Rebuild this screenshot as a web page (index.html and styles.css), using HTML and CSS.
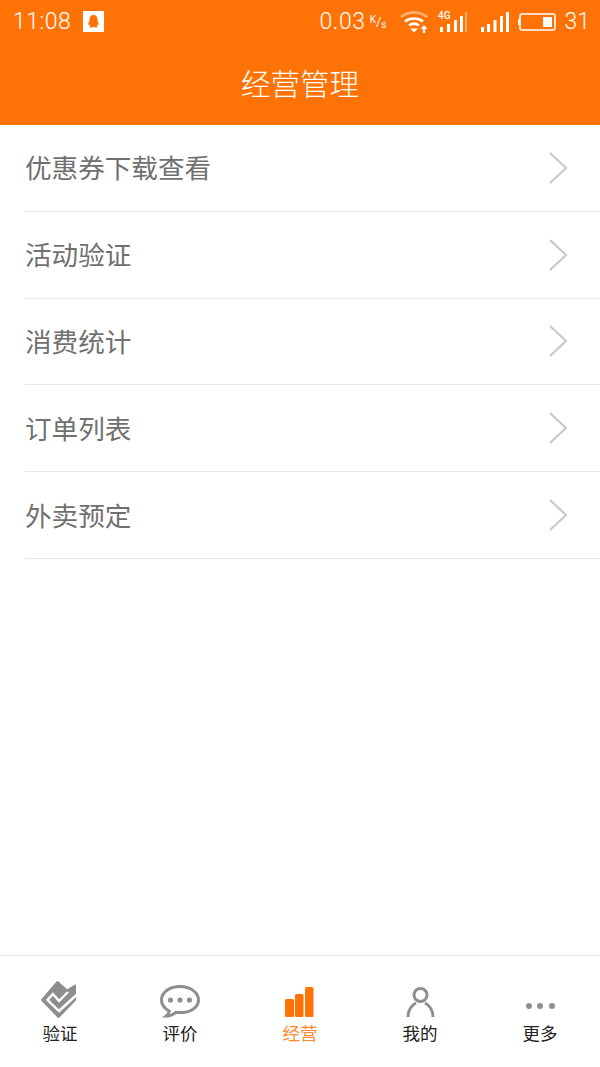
FILE: index.html
```html
<!DOCTYPE html>
<html lang="zh-CN">
<head>
  <meta charset="UTF-8">
  <title>经营管理</title>
  <link rel="stylesheet" href="styles.css">
</head>
<body>

<div class="page">
  <header class="top">
    <div class="status">
      <span class="time">11:08</span>
      <svg class="qq" width="21" height="21" viewBox="0 0 21 21">
        <rect width="21" height="21" fill="#fff"/>
        <path d="M10.500 4c-2.600 0-4 2-4 4.400v1.400l-1.300 3c-.3 1 .2 1.400 1.100.7.2.8.6 1.400 1 1.800-.8.4-1.100.9-.4 1.100 1 .2 2.300 0 3.100-.5h1c.8.5 2.100.7 3.100.5.7-.2.4-.7-.4-1.100.4-.4.8-1 1-1.800.9.700 1.400.300 1.100-.7l-1.300-3V8.400C14.500 6 13.100 4 10.500 4z" fill="#ff7306"/>
      </svg>
      <span class="speed">0.03</span>
      <span class="unit"><span class="unit-k">K</span>/<span class="unit-s">s</span></span>
      <svg class="wifi" width="28" height="24" viewBox="0 0 28 24" fill="none" stroke="#fff" stroke-width="2.600">
        <path d="M1 7C8 1 20 1 27 7" stroke-opacity=".45"/>
        <path d="M5 11.500c5-4 13-4 18 0"/>
        <path d="M9 15.500c3-2.300 7-2.300 10 0"/>
        <path d="M10 18.500h8l-4 4z" fill="#fff" stroke="none"/>
        <path d="M24 23v-5" stroke-width="2.200"/>
        <path d="M20.500 19l3.500-4 3.500 4z" fill="#fff" stroke="none"/>
      </svg>
      <svg class="sig" width="30" height="24" viewBox="0 0 30 24" fill="#fff">
        <text x="0" y="9" class="lte">4G</text>
        <rect x="2" y="17" width="3" height="5"/>
        <rect x="9" y="14" width="3" height="8"/>
        <rect x="16" y="10" width="3" height="12"/>
        <rect x="22" y="6" width="3" height="16"/>
        <rect x="27" y="2" width="2" height="20" fill-opacity=".4"/>
      </svg>
      <svg class="sig2" width="28" height="24" viewBox="0 0 28 24" fill="#fff">
        <rect x="0" y="17" width="3" height="5"/>
        <rect x="6" y="14" width="3" height="8"/>
        <rect x="12.500" y="10" width="3" height="12"/>
        <rect x="19" y="6" width="3" height="16"/>
        <rect x="25" y="2" width="3" height="20"/>
      </svg>
      <svg class="batt" width="38" height="20" viewBox="0 0 38 20" fill="none">
        <rect x="2" y="2" width="35" height="16" rx="2" stroke="#fff" stroke-width="1.600"/>
        <rect x="0" y="7" width="1.500" height="6" fill="#fff"/>
        <rect x="25" y="5" width="9" height="10" fill="#fff"/>
      </svg>
      <span class="level">31</span>
    </div>
    <h1 class="title">经营管理</h1>
  </header>

  <ul class="menu">
    <li class="row">优惠券下载查看<svg class="arrow" width="20" height="32" viewBox="0 0 20 32" fill="none" stroke="#c9c9c9" stroke-width="2.200"><path d="M2 1l16 15L2 31"/></svg></li>
    <li class="row">活动验证<svg class="arrow" width="20" height="32" viewBox="0 0 20 32" fill="none" stroke="#c9c9c9" stroke-width="2.200"><path d="M2 1l16 15L2 31"/></svg></li>
    <li class="row">消费统计<svg class="arrow" width="20" height="32" viewBox="0 0 20 32" fill="none" stroke="#c9c9c9" stroke-width="2.200"><path d="M2 1l16 15L2 31"/></svg></li>
    <li class="row">订单列表<svg class="arrow" width="20" height="32" viewBox="0 0 20 32" fill="none" stroke="#c9c9c9" stroke-width="2.200"><path d="M2 1l16 15L2 31"/></svg></li>
    <li class="row">外卖预定<svg class="arrow" width="20" height="32" viewBox="0 0 20 32" fill="none" stroke="#c9c9c9" stroke-width="2.200"><path d="M2 1l16 15L2 31"/></svg></li>
  </ul>

  <nav class="tabs">
    <div class="tab">
      <svg width="40" height="38" viewBox="0 0 40 38">
        <path d="M17.500 2L27 10.500 35 5.500V20L18.500 37 2 20z" fill="#8e8e8e" stroke="#8e8e8e" stroke-width="2" stroke-linejoin="round"/>
        <path d="M37 14.500L19 31 7.500 20l5.500-6 6 7 9-9" fill="none" stroke="#fff" stroke-width="2.400"/>
      </svg>
      <span>验证</span>
    </div>
    <div class="tab">
      <svg width="40" height="38" viewBox="0 0 40 38">
        <path d="M20 6.500C10 6.500 1.500 12 1.500 20c0 4.800 3.300 8.700 7.800 11-.3 2-1.300 3.700-3 5 3.800 0 7-1.500 9.500-3.700 1.300.2 2.900.3 4.200.3 10 0 18.500-5 18.500-12.600S30 6.500 20 6.500z" fill="none" stroke="#8e8e8e" stroke-width="3"/>
        <circle cx="10.500" cy="20" r="2.600" fill="#8e8e8e"/>
        <circle cx="20" cy="20" r="2.600" fill="#8e8e8e"/>
        <circle cx="29.500" cy="20" r="2.600" fill="#8e8e8e"/>
      </svg>
      <span>评价</span>
    </div>
    <div class="tab active">
      <svg width="40" height="38" viewBox="0 0 40 38" fill="#ff7306">
        <rect x="5" y="19" width="9" height="18" rx="1.500"/>
        <rect x="15" y="14" width="8.500" height="23" rx="1.500"/>
        <rect x="25" y="7" width="8.500" height="30" rx="1.500"/>
      </svg>
      <span>经营</span>
    </div>
    <div class="tab">
      <svg width="40" height="38" viewBox="0 0 40 38" fill="none" stroke="#8e8e8e" stroke-width="3">
        <circle cx="20.500" cy="15" r="6.500"/>
        <path d="M8 37c0-7 4-12 8-14M33 37c0-7-4-12-8-14"/>
      </svg>
      <span>我的</span>
    </div>
    <div class="tab">
      <svg width="40" height="38" viewBox="0 0 40 38" fill="#8e8e8e">
        <circle cx="9" cy="26" r="3"/>
        <circle cx="20" cy="26" r="3"/>
        <circle cx="32" cy="26" r="3"/>
      </svg>
      <span>更多</span>
    </div>
  </nav>
</div>

</body>
</html>
```

FILE: styles.css
```css
html, body {
  margin: 0;
  padding: 0;
}

body {
  font-family: "Noto Sans CJK SC", Roboto, sans-serif;
  background: #fff;
}

.page {
  width: 600px;
  height: 1067px;
  display: flex;
  flex-direction: column;
  overflow: hidden;
}

.top {
  height: 125px;
  flex: none;
  background: #ff7306;
  color: #fff;
}

.status {
  height: 43px;
  display: flex;
  align-items: center;
  font-family: Roboto, sans-serif;
  font-weight: 300;
  font-size: 23px;
  padding: 0 10px 0 13px;
}

.time {
  letter-spacing: 0.5px;
}

.qq {
  margin-left: 12px;
}

.speed {
  margin-left: auto;
  letter-spacing: 0.6px;
}

.unit {
  font-size: 13px;
  margin-left: 4px;
  font-weight: 400;
  line-height: 1;
}

.unit-k {
  position: relative;
  top: -3px;
  font-size: 10px;
}

.unit-s {
  position: relative;
  top: 2px;
  font-size: 10px;
}

.wifi {
  margin-left: 14px;
}

.sig {
  margin-left: 10px;
}

.sig2 {
  margin-left: 13px;
}

.batt {
  margin-left: 9px;
}

.level {
  margin-left: 8px;
}

.lte {
  font-family: Roboto, sans-serif;
  font-size: 10px;
  font-weight: 500;
}

.title {
  margin: 0;
  height: 82px;
  line-height: 79px;
  text-align: center;
  font-size: 29.500px;
  font-weight: 300;
}

.menu {
  list-style: none;
  margin: 0;
  padding: 0 0 0 25px;
  flex: 1;
}

.row {
  height: 86.800px;
  box-sizing: border-box;
  border-bottom: 1px solid #e8e8e8;
  display: flex;
  align-items: center;
  justify-content: space-between;
  font-size: 26.600px;
  color: #707070;
  padding: 0 32px 2px 0;
}

.arrow {
  margin-top: 2px;
}

.tabs {
  height: 112px;
  flex: none;
  border-top: 1px solid #e4e4e4;
  display: flex;
  box-sizing: border-box;
}

.tab {
  width: 120px;
  display: flex;
  flex-direction: column;
  align-items: center;
  padding-top: 24px;
  font-size: 17.500px;
  line-height: 26px;
  color: #222;
}

.tab svg {
  margin-bottom: 2px;
}

.tab.active {
  color: #ff8a2a;
}
```
